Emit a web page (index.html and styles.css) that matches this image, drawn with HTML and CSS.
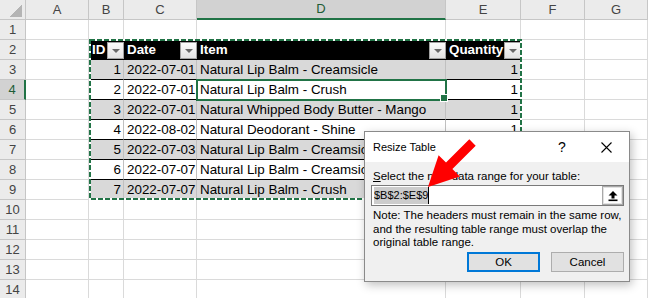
FILE: index.html
```html
<!DOCTYPE html>
<html lang="en">
<head>
  <meta charset="UTF-8">
  <title>Resize Table</title>
  <link rel="stylesheet" href="styles.css">
</head>
<body>
<div class="sheet">
  <div class="row">
    <div class="c corner"></div>
    <div class="c ch">A</div><div class="c ch">B</div><div class="c ch">C</div>
    <div class="c ch hl">D</div><div class="c ch">E</div><div class="c ch">F</div><div class="c ch">G</div>
  </div>
  <div class="row">
    <div class="c rh">1</div>
    <div class="c"></div><div class="c"></div><div class="c"></div><div class="c"></div>
    <div class="c"></div><div class="c"></div><div class="c"></div>
  </div>
  <div class="row">
    <div class="c rh">2</div>
    <div class="c"></div>
    <div class="c th"><span>ID</span><span class="dd"></span></div>
    <div class="c th"><span>Date</span><span class="dd"></span></div>
    <div class="c th"><span>Item</span><span class="dd"></span></div>
    <div class="c th"><span>Quantity</span><span class="dd"></span></div>
    <div class="c"></div><div class="c"></div>
  </div>
  <div class="row">
    <div class="c rh">3</div>
    <div class="c"></div>
    <div class="c t g r">1</div><div class="c t g r">2022-07-01</div>
    <div class="c t g">Natural Lip Balm - Creamsicle</div><div class="c t g r">1</div>
    <div class="c"></div><div class="c"></div>
  </div>
  <div class="row">
    <div class="c rh hl">4</div>
    <div class="c"></div>
    <div class="c t r">2</div><div class="c t r">2022-07-01</div>
    <div class="c t active">Natural Lip Balm - Crush</div><div class="c t r">1</div>
    <div class="c"></div><div class="c"></div>
  </div>
  <div class="row">
    <div class="c rh">5</div>
    <div class="c"></div>
    <div class="c t g r">3</div><div class="c t g r">2022-07-01</div>
    <div class="c t g">Natural Whipped Body Butter - Mango</div><div class="c t g r">1</div>
    <div class="c"></div><div class="c"></div>
  </div>
  <div class="row">
    <div class="c rh">6</div>
    <div class="c"></div>
    <div class="c t r">4</div><div class="c t r">2022-08-02</div>
    <div class="c t">Natural Deodorant - Shine</div><div class="c t r">1</div>
    <div class="c"></div><div class="c"></div>
  </div>
  <div class="row">
    <div class="c rh">7</div>
    <div class="c"></div>
    <div class="c t g r">5</div><div class="c t g r">2022-07-03</div>
    <div class="c t g">Natural Lip Balm - Creamsicle</div><div class="c t g r">1</div>
    <div class="c"></div><div class="c"></div>
  </div>
  <div class="row">
    <div class="c rh">8</div>
    <div class="c"></div>
    <div class="c t r">6</div><div class="c t r">2022-07-07</div>
    <div class="c t">Natural Lip Balm - Creamsicle</div><div class="c t r">1</div>
    <div class="c"></div><div class="c"></div>
  </div>
  <div class="row">
    <div class="c rh">9</div>
    <div class="c"></div>
    <div class="c t g r">7</div><div class="c t g r">2022-07-07</div>
    <div class="c t g">Natural Lip Balm - Crush</div><div class="c t g r">1</div>
    <div class="c"></div><div class="c"></div>
  </div>
  <div class="row">
    <div class="c rh">10</div>
    <div class="c"></div><div class="c"></div><div class="c"></div><div class="c"></div>
    <div class="c"></div><div class="c"></div><div class="c"></div>
  </div>
  <div class="row">
    <div class="c rh">11</div>
    <div class="c"></div><div class="c"></div><div class="c"></div><div class="c"></div>
    <div class="c"></div><div class="c"></div><div class="c"></div>
  </div>
  <div class="row">
    <div class="c rh">12</div>
    <div class="c"></div><div class="c"></div><div class="c"></div><div class="c"></div>
    <div class="c"></div><div class="c"></div><div class="c"></div>
  </div>
  <div class="row">
    <div class="c rh">13</div>
    <div class="c"></div><div class="c"></div><div class="c"></div><div class="c"></div>
    <div class="c"></div><div class="c"></div><div class="c"></div>
  </div>
  <div class="row">
    <div class="c rh">14</div>
    <div class="c"></div><div class="c"></div><div class="c"></div><div class="c"></div>
    <div class="c"></div><div class="c"></div><div class="c"></div>
  </div>
</div>

<!-- copy marquee around B2:E9 -->
<svg class="marquee" width="648" height="298">
  <rect x="90" y="40" width="431" height="159" fill="none" stroke="#fff" stroke-width="2"/>
  <rect x="90" y="40" width="431" height="159" fill="none" stroke="#217346" stroke-width="2" stroke-dasharray="5 2"/>
</svg>

<div class="dialog">
  <div class="dialog-title">
    <span class="dialog-name">Resize Table</span>
    <span class="dialog-help">?</span>
    <span class="dialog-close">
      <svg width="11" height="11" viewBox="0 0 11 11"><path d="M0.5 0.5 L10.5 10.5 M10.5 0.5 L0.5 10.5" stroke="#000" stroke-width="1.1" fill="none"/></svg>
    </span>
  </div>
  <div class="dialog-body">
    <div class="dialog-label"><u>S</u>elect the new data range for your table:</div>
    <div class="range-box">
      <div class="range-text"><span class="range-sel">$B$2:$E$9</span></div>
      <div class="range-btn">
        <svg width="12" height="12" viewBox="0 0 12 12"><path d="M6 1 L10.5 5.5 L7.5 5.5 L7.5 8.5 L4.5 8.5 L4.5 5.5 L1.5 5.5 Z" fill="#000"/><rect x="1.5" y="9.5" width="9" height="1.6" fill="#000"/></svg>
      </div>
    </div>
    <div class="dialog-note">Note: The headers must remain in the same row,<br>and the resulting table range must overlap the<br>original table range.</div>
    <div class="dialog-buttons">
      <div class="btn btn-default">OK</div>
      <div class="btn">Cancel</div>
    </div>
  </div>
</div>

<svg class="pointer" width="648" height="298">
  <polygon points="469.3,139.3 475.7,145.7 452.4,169 459.8,176.4 428,187 438.6,155.2 446,162.6" fill="#ff0000"/>
</svg>
</body>
</html>
```

FILE: styles.css
```css
* {
  margin: 0;
  padding: 0;
  box-sizing: border-box;
}

body {
  position: relative;
  width: 648px;
  height: 298px;
  overflow: hidden;
  background: #fff;
  font-family: "Liberation Sans", Arial, sans-serif;
  color: #000;
}

.row {
  display: grid;
  grid-template-columns: 26px 63px 35px 73px 249px 75px 64px 63px;
  height: 20px;
}

.c {
  border-right: 1px solid #dadada;
  border-bottom: 1px solid #dadada;
  padding: 0 2px 0 3px;
  font-size: 13.4px;
  line-height: 19px;
  white-space: nowrap;
}

/* headers */
.ch,
.rh {
  background: #ebebeb;
  border-right-color: #c6c6c6;
  border-bottom-color: #c6c6c6;
  color: #444;
  font-size: 13px;
  text-align: center;
  padding: 0;
}

.corner {
  background: #ebebeb linear-gradient(135deg, transparent 50%, #b4b4b4 50%) no-repeat 10px 5px / 12px 12px;
  border-right-color: #c6c6c6;
  border-bottom-color: #c6c6c6;
}

.ch.hl {
  background: #d2d2d2;
  border-bottom: 2px solid #217346;
  line-height: 18px;
  color: #1d5c36;
}

.rh.hl {
  background: #d2d2d2;
  border-right: 2px solid #217346;
  color: #1d5c36;
}

/* table */
.th {
  display: flex;
  justify-content: space-between;
  align-items: flex-start;
  background: #000;
  color: #fff;
  font-weight: bold;
  border-right: 0;
  border-bottom-color: #000;
  padding: 0 0 0 3px;
}

.dd {
  flex: none;
  display: flex;
  align-items: center;
  justify-content: center;
  width: 17px;
  height: 17px;
  margin-top: 2px;
  background: linear-gradient(#fbfbfb, #e2e2e2);
  border: 1px solid #a2a2a2;
}

.dd:after {
  content: "";
  border-left: 4px solid transparent;
  border-right: 4px solid transparent;
  border-top: 4px solid #6a6a6a;
}

.t {
  border-bottom-color: #000;
  border-right-color: #c0c0c0;
}

.g {
  background: #d9d9d9;
}

.r {
  text-align: right;
}

.active {
  position: relative;
  outline: 2px solid #217346;
  outline-offset: -1px;
}

.active:after {
  content: "";
  position: absolute;
  right: -3px;
  bottom: -3px;
  width: 6px;
  height: 6px;
  background: #217346;
  border: 1px solid #fff;
}

.marquee,
.pointer {
  position: absolute;
  top: 0;
  left: 0;
  pointer-events: none;
}

/* dialog */
.dialog {
  position: absolute;
  left: 364px;
  top: 131px;
  width: 266px;
  height: 151px;
  border: 1px solid #8a8a8a;
  background: #f0f0f0;
  box-shadow: 2px 3px 9px rgba(0, 0, 0, 0.25);
  font-size: 11.5px;
}

.dialog-title {
  display: flex;
  align-items: center;
  height: 30px;
  background: #fff;
  padding-left: 8px;
}

.dialog-name {
  flex: 1;
  font-size: 11px;
}

.dialog-help {
  width: 44px;
  text-align: center;
  font-size: 14px;
}

.dialog-close {
  display: flex;
  justify-content: center;
  width: 45px;
}

.dialog-body {
  padding: 7px 5px 9px 6px;
}

.dialog-label {
  line-height: 14px;
  padding-left: 2px;
}

.range-box {
  display: flex;
  height: 21px;
  margin-top: 2px;
  background: #fff;
  border: 1px solid #7a7a7a;
}

.range-text {
  flex: 1;
  padding: 1px 0 0 2px;
  font-size: 11px;
}

.range-sel {
  display: inline-block;
  background: #cccccc;
  line-height: 17px;
  border-right: 1px solid #000;
}

.range-btn {
  display: flex;
  align-items: center;
  justify-content: center;
  width: 21px;
  border: 1px solid #a8a8a8;
  box-shadow: inset 0 0 0 1px #e2e2e2;
}

.dialog-note {
  margin-top: 3px;
  line-height: 13.5px;
  padding-left: 2px;
}

.dialog-buttons {
  display: flex;
  justify-content: flex-end;
  gap: 11px;
  margin-top: 2.5px;
}

.btn {
  width: 73px;
  height: 20px;
  background: #e1e1e1;
  border: 1px solid #adadad;
  text-align: center;
  line-height: 18px;
}

.btn-default {
  border: 2px solid #0078d7;
  line-height: 16px;
}
```
